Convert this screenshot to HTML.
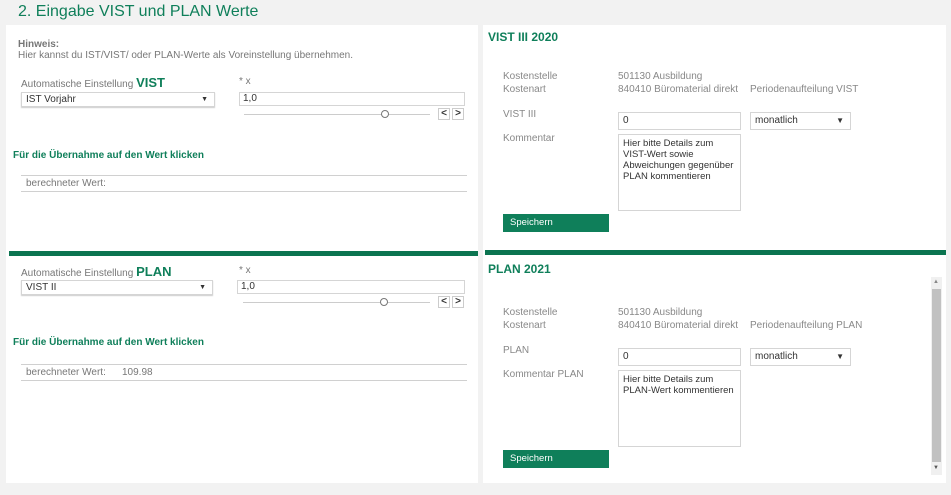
<!DOCTYPE html>
<html><head><meta charset="utf-8"><style>
*{margin:0;padding:0;box-sizing:border-box}
body{width:951px;height:495px;background:#f2f2f2;font-family:"Liberation Sans",sans-serif;position:relative;overflow:hidden;color:#777}
.a{position:absolute;white-space:nowrap;line-height:1.15}
.w{position:absolute;background:#fff}
.g{color:#0f7f5a}
.bar{position:absolute;background:#0b7450;height:5px}
.box{position:absolute;border:1px solid #d5d5d5;background:#fff;font-size:10px;color:#333;padding:0 4px}
.sel{box-shadow:0 1px 1px #ccc}
.l{font-size:10px;color:#888}
.btn{position:absolute;background:#0f7f5a;color:#fff;font-size:9.5px;padding:0 7px;line-height:18px}
.hr{position:absolute;height:1px;background:#d0d0d0}
.arr{position:absolute;width:12px;height:12px;border:1px solid #ccc;background:#fff;font-size:10px;line-height:10px;text-align:center;color:#333;font-weight:bold}
.ta{white-space:normal;line-height:11px;padding:3px 4px;font-size:9.5px}
</style></head><body>
<div class="a g" style="left:18px;top:3px;font-size:16px">2. Eingabe VIST und PLAN Werte</div>
<div class="w" style="left:6px;top:25px;width:472px;height:458px"></div>
<div class="w" style="left:483px;top:25px;width:463px;height:458px"></div>
<div class="bar" style="left:9px;top:251px;width:469px"></div>
<div class="bar" style="left:485px;top:250px;width:461px"></div>

<div class="a" style="left:18px;top:39px;font-size:10px;font-weight:bold;color:#777">Hinweis:</div>
<div class="a" style="left:18px;top:50px;font-size:10px">Hier kannst du IST/VIST/ oder PLAN-Werte als Voreinstellung übernehmen.</div>

<div class="a" style="left:21px;top:76px;font-size:10px;line-height:14px">Automatische Einstellung <b class="g" style="font-size:13px">VIST</b></div>
<div class="box sel" style="left:21px;top:92px;width:194px;height:15px;line-height:13px">IST Vorjahr<span style="position:absolute;right:6px;top:0;font-size:7px">▼</span></div>
<div class="a" style="left:239px;top:76px;font-size:10px">* x</div>
<div class="box" style="left:239px;top:92px;width:226px;height:14px;line-height:12px;padding:0 3px">1,0</div>
<div class="hr" style="left:244px;top:114px;width:186px;background:#ccc"></div>
<div class="a" style="left:381px;top:110px;width:8px;height:8px;border:1px solid #777;border-radius:50%;background:#fff"></div>
<div class="arr" style="left:438px;top:108px">&lt;</div><div class="arr" style="left:452px;top:108px">&gt;</div>
<div class="a g" style="left:13px;top:150px;font-size:10px;font-weight:bold">Für die Übernahme auf den Wert klicken</div>
<div class="hr" style="left:21px;top:175px;width:446px"></div>
<div class="a" style="left:26px;top:178px;font-size:10px">berechneter Wert:</div>
<div class="hr" style="left:21px;top:191px;width:446px"></div>

<div class="a" style="left:21px;top:265px;font-size:10px;line-height:14px">Automatische Einstellung <b class="g" style="font-size:13px">PLAN</b></div>
<div class="box sel" style="left:21px;top:280px;width:192px;height:15px;line-height:13px">VIST II<span style="position:absolute;right:6px;top:0;font-size:7px">▼</span></div>
<div class="a" style="left:239px;top:265px;font-size:10px">* x</div>
<div class="box" style="left:237px;top:280px;width:228px;height:14px;line-height:12px;padding:0 3px">1,0</div>
<div class="hr" style="left:243px;top:302px;width:187px;background:#ccc"></div>
<div class="a" style="left:380px;top:298px;width:8px;height:8px;border:1px solid #777;border-radius:50%;background:#fff"></div>
<div class="arr" style="left:438px;top:296px">&lt;</div><div class="arr" style="left:452px;top:296px">&gt;</div>
<div class="a g" style="left:13px;top:337px;font-size:10px;font-weight:bold">Für die Übernahme auf den Wert klicken</div>
<div class="hr" style="left:21px;top:364px;width:446px"></div>
<div class="a" style="left:26px;top:367px;font-size:10px">berechneter Wert:</div>
<div class="a" style="left:122px;top:367px;font-size:10px">109.98</div>
<div class="hr" style="left:21px;top:380px;width:446px"></div>

<!-- right top -->
<div class="a g" style="left:488px;top:31px;font-size:12px;font-weight:bold">VIST III 2020</div>
<div class="a l" style="left:503px;top:71px">Kostenstelle</div>
<div class="a l" style="left:618px;top:71px">501130 Ausbildung</div>
<div class="a l" style="left:503px;top:84px">Kostenart</div>
<div class="a l" style="left:618px;top:84px">840410 Büromaterial direkt</div>
<div class="a l" style="left:750px;top:84px">Periodenaufteilung VIST</div>
<div class="a l" style="left:503px;top:109px">VIST III</div>
<div class="box" style="left:618px;top:112px;width:123px;height:18px;line-height:16px">0</div>
<div class="box" style="left:750px;top:112px;width:101px;height:18px;line-height:16px">monatlich<span style="position:absolute;right:6px;top:0;font-size:8px">▼</span></div>
<div class="a l" style="left:503px;top:133px">Kommentar</div>
<div class="box ta" style="left:618px;top:134px;width:123px;height:77px">Hier bitte Details zum VIST-Wert sowie Abweichungen gegenüber PLAN kommentieren</div>
<div class="btn" style="left:503px;top:214px;width:106px;height:18px">Speichern</div>

<!-- right bottom -->
<div class="a g" style="left:488px;top:263px;font-size:12px;font-weight:bold">PLAN 2021</div>
<div class="a" style="left:931px;top:277px;width:11px;height:198px;background:#f0f0f0"></div>
<div class="a" style="left:932px;top:289px;width:9px;height:173px;background:#c1c1c1"></div>
<div class="a" style="left:933px;top:279px;font-size:6px;color:#888">▲</div>
<div class="a" style="left:933px;top:465px;font-size:6px;color:#555">▼</div>
<div class="a l" style="left:503px;top:307px">Kostenstelle</div>
<div class="a l" style="left:618px;top:307px">501130 Ausbildung</div>
<div class="a l" style="left:503px;top:320px">Kostenart</div>
<div class="a l" style="left:618px;top:320px">840410 Büromaterial direkt</div>
<div class="a l" style="left:750px;top:320px">Periodenaufteilung PLAN</div>
<div class="a l" style="left:503px;top:345px">PLAN</div>
<div class="box" style="left:618px;top:348px;width:123px;height:18px;line-height:16px">0</div>
<div class="box" style="left:750px;top:348px;width:101px;height:18px;line-height:16px">monatlich<span style="position:absolute;right:6px;top:0;font-size:8px">▼</span></div>
<div class="a l" style="left:503px;top:369px">Kommentar PLAN</div>
<div class="box ta" style="left:618px;top:370px;width:123px;height:77px">Hier bitte Details zum PLAN-Wert kommentieren</div>
<div class="btn" style="left:503px;top:450px;width:106px;height:18px">Speichern</div>
</body></html>
